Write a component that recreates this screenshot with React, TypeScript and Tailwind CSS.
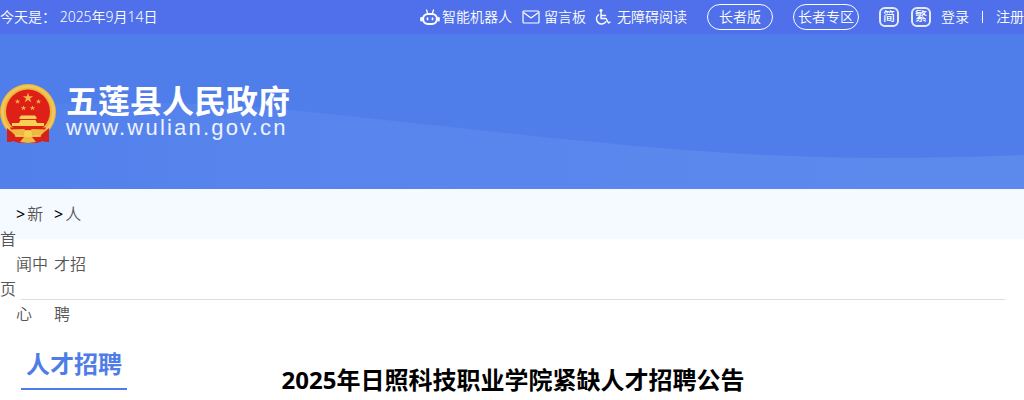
import React from 'react';

const CRUMBS = [
  { lines: ['新', '闻中', '心'] },
  { lines: ['人', '才招', '聘'] },
];

function RobotIcon() {
  return (
    <svg width="20" height="18" viewBox="0 0 20 18" fill="none" stroke="white" strokeLinecap="round">
      <path d="M6.500 2 7.500 5M13.500 2 12.500 5" strokeWidth="1.300" />
      <rect x="3" y="6" width="14" height="10" rx="5" strokeWidth="2.200" />
      <path d="M1.200 10v2.500M18.800 10v2.500" strokeWidth="2" />
      <path d="M7.500 10.200v1.300M12.500 10.200v1.300" strokeWidth="1.700" />
    </svg>
  );
}

function MailIcon() {
  return (
    <svg width="18" height="14" viewBox="0 0 18 14" fill="none" stroke="white" strokeWidth="1.200" strokeLinejoin="round">
      <rect x="1" y="1" width="16" height="12" rx="1" />
      <path d="m1.500 2.500 7.500 5.500 7.500-5.500" />
    </svg>
  );
}

function WheelchairIcon() {
  return (
    <svg width="17" height="18" viewBox="0 0 17 18" fill="none" stroke="white" strokeWidth="1.400" strokeLinecap="round" strokeLinejoin="round">
      <circle cx="7" cy="2.500" r="1.500" fill="white" stroke="none" />
      <path d="M7 4.500v6h5l2.500 4.500 1.500-.8M7 7.500h4.500" />
      <path d="M4.500 6.700a5.200 5.200 0 1 0 7.500 7" />
    </svg>
  );
}

function Emblem() {
  return (
    <svg width="56" height="60" viewBox="0 0 56 60">
      <path d="M8 43 7 58l7-1 5 2h18l5-2 7 1-1-15z" fill="#d4211c" />
      <circle cx="28" cy="28" r="28" fill="#e8b440" />
      <circle cx="28" cy="28" r="25.500" fill="none" stroke="#f2c656" strokeWidth="3" />
      <circle cx="28" cy="27.500" r="22" fill="#df2018" />
      <path d="m28 8.500 1.200 3.700h4l-3.200 2.400 1.200 3.700-3.200-2.300-3.200 2.300 1.200-3.700-3.200-2.400h4z" fill="#f3b545" />
      {[[17.5, 17.5], [38.5, 17.5], [23.5, 24], [32.5, 24]].map(([x, y]) => (
        <path key={x} transform={`translate(${x} ${y})`} d="m0-2.600.7 1.800h1.900L1.100.4l.6 1.900L0 1.100l-1.700 1.200.6-1.900-1.500-1.200h1.900z" fill="#f3b545" />
      ))}
      <path d="M19.500 33.500 21 31.500h14l1.500 2v1.500h-17zM20.500 36h15l1.500 3H19zM12 39h32v3H12z" fill="#f8d154" />
      <path d="M10 43.500h36l-2 5H12z" fill="#df2018" />
      <path d="M10 45.500 24 45l4 3 4-3 14 .5-5 6-9-1.500-4 3-4-3-9 1.500z" fill="#efb83f" />
      <circle cx="28" cy="50" r="4" fill="#f8d154" />
      <path d="M7 44 15 51l-1 6-7 1zM49 44l-8 7 1 6 7 1z" fill="#d4211c" />
      <path d="M14 53h28l-1 5H15z" fill="#df2018" />
      <path d="m20 58 4-5h8l4 5-8 1z" fill="#f0b83c" />
    </svg>
  );
}

function TopBar() {
  return (
    <div className="flex h-[34px] items-center justify-between bg-[#506fea] text-sm font-[350] whitespace-nowrap text-white">
      <span>今天是： 2025年9月14日</span>
      <nav className="flex items-center">
        <a href="#" className="mr-2.5 flex items-center gap-0.5"><RobotIcon />智能机器人</a>
        <a href="#" className="mr-2 flex items-center gap-1"><MailIcon />留言板</a>
        <a href="#" className="mr-5 flex items-center gap-1.5"><WheelchairIcon />无障碍阅读</a>
        <button className="mr-5 h-[26px] w-[66px] rounded-full border border-white">长者版</button>
        <button className="mr-5 h-[26px] w-[66px] rounded-full border border-white">长者专区</button>
        <button className="mr-3 flex size-5 items-center justify-center rounded-md border-2 border-white/85 text-xs font-medium">简</button>
        <button className="mr-2.5 flex size-5 items-center justify-center rounded-md border-2 border-white/85 text-xs font-medium">繁</button>
        <a href="#">登录</a>
        <span className="mx-[13px] h-3 w-px bg-white" />
        <a href="#">注册</a>
      </nav>
    </div>
  );
}

function Header() {
  return (
    <header className="relative flex h-[155px] items-center bg-[#4f7dea] pt-1">
      <svg className="absolute inset-0 h-full w-full" viewBox="0 0 1024 155" preserveAspectRatio="none">
        <defs>
          <linearGradient id="wave" x1="0" x2="1" y1="0" y2="0">
            <stop offset="0" stopColor="#5280eb" />
            <stop offset="0.3" stopColor="#5885ed" />
            <stop offset="1" stopColor="#5c8aec" />
          </linearGradient>
        </defs>
        <path d="M0 73C110 66 210 68 300 77C500 97 690 124 880 124Q950 124 1024 121V155H0z" fill="url(#wave)" />
      </svg>
      <a href="#" className="relative flex items-center gap-2.5 text-white">
        <Emblem />
        <span className="flex flex-col pb-1">
          <span className="font-['Liberation_Sans','Noto_Sans_CJK_SC',sans-serif] text-[32px] leading-8 font-bold">五莲县人民政府</span>
          <span className="font-['Liberation_Sans',sans-serif] text-[22px] leading-5 tracking-widest text-white/90">www.wulian.gov.cn</span>
        </span>
      </a>
    </header>
  );
}

function Breadcrumb() {
  return (
    <nav className="flex h-[50px] bg-[#f4faff] text-base leading-[50px] font-[350] text-[#555]">
      <a href="#" className="w-4 pt-[25px]">首页</a>
      {CRUMBS.map(({ lines }) => (
        <div key={lines[0]} className="mr-1.5 w-8 whitespace-nowrap">
          <span className="mr-0.5 font-normal text-black">&gt;</span>
          <a href="#">
            {lines.map((l, i) => <React.Fragment key={l}>{i > 0 && <br />}{l}</React.Fragment>)}
          </a>
        </div>
      ))}
    </nav>
  );
}

export default function App() {
  return (
    <div className="bg-white font-['Noto_Sans','Noto_Sans_CJK_SC',sans-serif]">
      <TopBar />
      <Header />
      <Breadcrumb />
      <main className="mr-[19px] ml-[21px] mt-[60px] grid border-t border-[#ddd]">
        <h2 className="mt-10 self-start justify-self-start border-b-2 border-[#4f7de8] px-[5px] text-2xl leading-[48px] font-bold text-[#4f7de8] [grid-area:1/1]">人才招聘</h2>
        <h1 className="mt-16 justify-self-center text-2xl leading-8 font-bold text-black [grid-area:1/1]">2025年日照科技职业学院紧缺人才招聘公告</h1>
      </main>
    </div>
  );
}
